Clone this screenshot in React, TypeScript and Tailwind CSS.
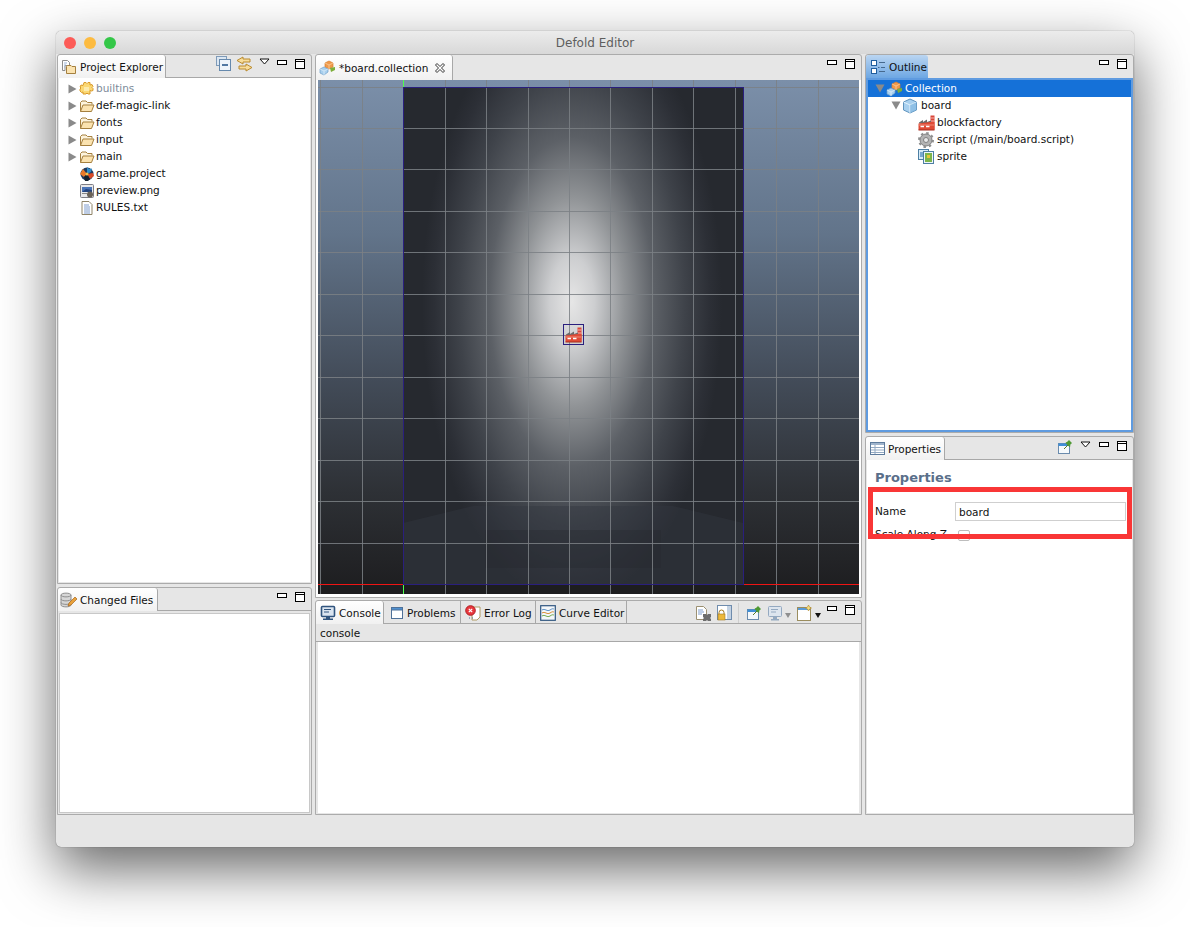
import React from 'react';

type IconProps = { className?: string };

function FolderIcon() {
  return (
    <svg width="16" height="16" viewBox="0 0 16 16" className="shrink-0">
      <path d="M1.500 13.500V4.500L3 3h4l1.500 1.500h4.500v2" fill="#fdf3dc" stroke="#a5803f" />
      <path d="M1.500 13.500L4 7h11l-2.500 6.500z" fill="#fbe3b0" stroke="#a5803f" strokeLinejoin="round" />
    </svg>
  );
}

function PuzzleIcon() {
  return (
    <svg width="16" height="16" viewBox="0 0 16 16" className="shrink-0">
      <path d="M5 1.500h2l1 1 1-1h2V4l2-.5 1 2-1 1 1 1v2l-1.500.5-1.500-.5v3.500H9l-1-1-1 1H4V11l-1.500.5L1 10V8l1-1-1-1 1-2 2 .5z" fill="#fbd873" stroke="#d99a2b" />
      <path d="M5 6h5v4H5z" fill="#fdf0bb" opacity="0.8" />
    </svg>
  );
}

function GameIcon() {
  return (
    <svg width="16" height="16" viewBox="0 0 16 16" className="shrink-0">
      <circle cx="8" cy="8" r="6.500" fill="#1e3a5f" />
      <path d="M8 1l2 2 3-.5L12 6 8 8z" fill="#2e8bc9" />
      <path d="M1 8l3-5 4 5-3 3z" fill="#e8792b" />
      <path d="M8 8l6-1 1 3-4 3z" fill="#d94a26" />
      <path d="M5 11l3-3 3 5-2 2H6z" fill="#14202e" />
      <circle cx="8" cy="8" r="1.500" fill="#f4c24a" />
    </svg>
  );
}

function PngIcon() {
  return (
    <svg width="16" height="16" viewBox="0 0 16 16" className="shrink-0">
      <rect x="1.500" y="1.500" width="13" height="13" rx="1" fill="#e8e8ea" stroke="#7d7d84" />
      <rect x="3" y="4" width="10" height="5" fill="#4a74b8" />
      <path d="M3 9l4-3 6 1v2z" fill="#24457f" />
      <circle cx="11" cy="11.500" r="3" fill="#6a6258" />
      <rect x="3" y="10" width="5" height="1" fill="#888" />
    </svg>
  );
}

function TextFileIcon() {
  return (
    <svg width="16" height="16" viewBox="0 0 16 16" className="shrink-0">
      <path d="M3 1.500h7l3 3v10H3z" fill="#fff" stroke="#8f8468" />
      <path d="M5 5h5M5 7h6M5 9h6M5 11h6M5 13h6" stroke="#7f9ccb" />
    </svg>
  );
}

function CollectionIcon() {
  return (
    <svg width="17" height="16" viewBox="0 0 17 16" className="shrink-0">
      <path d="M6 3l4-2 4 2v4l-4 2-4-2z" fill="#f0994a" stroke="#d97e2c" strokeWidth="0.700" />
      <path d="M6 3l4 2 4-2M10 5v4" stroke="#fbd5a6" strokeWidth="0.700" fill="none" />
      <path d="M11 8l5-1v3l-4 2z" fill="#7cae3a" />
      <path d="M1 9l4-2 4 2v3l-4 3-4-2z" fill="#a9d0ee" stroke="#6f9fc8" strokeWidth="0.700" />
      <path d="M1 9l4 2 4-2M5 11v4" stroke="#e4f1fb" strokeWidth="0.700" fill="none" />
    </svg>
  );
}

function CubeIcon() {
  return (
    <svg width="16" height="16" viewBox="0 0 16 16" className="shrink-0">
      <path d="M8 1l6.500 3v8L8 15l-6.500-3V4z" fill="#a8d0ef" stroke="#5f93bd" />
      <path d="M1.500 4L8 7l6.500-3M8 7v8" stroke="#e6f3fc" fill="none" />
      <path d="M8 7l6.500-3v8L8 15z" fill="#7fb5df" opacity="0.6" />
    </svg>
  );
}

function FactoryIcon({ className }: IconProps) {
  return (
    <svg className={`shrink-0 ${className ?? ''}`} width="17" height="16" viewBox="0 0 17 16">
      <path d="M12.500 0.500h4v14h-4z" fill="#d9473a" />
      <path d="M12.500 3h4M12.500 6h4" stroke="#f6b6ae" />
      <path d="M1 7.500l4-2.500v2l4-2.500v2.500l4-1.500v3H1z" fill="#6b6b6b" />
      <path d="M0.500 8.500l12-1.500h4v8h-16z" fill="#df4a35" />
      <path d="M1 10h15" stroke="#f08a78" />
      <path d="M2.500 11.500h3.500M8 11.500h3.500" stroke="#fff" strokeWidth="1.400" />
      <path d="M0.500 15h16" stroke="#a52c1f" />
    </svg>
  );
}

function GearIcon() {
  return (
    <svg width="16" height="16" viewBox="0 0 16 16" className="shrink-0">
      <circle cx="8" cy="8" r="6" fill="#b3b3b3" stroke="#808080" />
      <circle cx="8" cy="8" r="7" fill="none" stroke="#8f8f8f" strokeWidth="2" strokeDasharray="2.500 3" />
      <circle cx="8" cy="8" r="2.500" fill="#e9e9e9" stroke="#808080" />
    </svg>
  );
}

function SpriteIcon() {
  return (
    <svg width="16" height="16" viewBox="0 0 16 16" className="shrink-0">
      <rect x="0.500" y="0.500" width="10" height="10" fill="#d7ebf8" stroke="#4d7fa3" />
      <rect x="5.500" y="2.500" width="10" height="12" fill="#eef6fb" stroke="#4d7fa3" />
      <rect x="7" y="4" width="7" height="9" fill="#7db54b" />
      <rect x="9" y="6" width="3" height="3" fill="#e8c53a" />
      <rect x="2" y="3" width="3" height="5" fill="#79a8cf" />
    </svg>
  );
}

function OutlineIcon() {
  return (
    <svg width="16" height="16" viewBox="0 0 16 16" className="shrink-0">
      <rect x="1.500" y="1.500" width="5" height="5" fill="#fff" stroke="#1f5d9e" />
      <rect x="1.500" y="9.500" width="5" height="5" fill="#fff" stroke="#1f5d9e" />
      <path d="M9 3.500h6M8 8.500h1.500M11 8.500h4M9 12.500h6" stroke="#46698e" />
    </svg>
  );
}

function ExplorerIcon() {
  return (
    <svg width="16" height="16" viewBox="0 0 16 16" className="shrink-0">
      <path d="M1.500 1.500h5l2 2v3H4v5H1.500z" fill="#fff" stroke="#8d8d8d" />
      <path d="M3 4h3M3 6h2M3 8h1" stroke="#9db5d8" />
      <path d="M5.500 14.500v-7l1-1H10l1 1h3.500v7z" fill="#fbe3b0" stroke="#a5803f" />
    </svg>
  );
}

function DatabasePencilIcon() {
  return (
    <svg width="17" height="16" viewBox="0 0 17 16" className="shrink-0">
      <path d="M1 3c0-2.500 10-2.500 10 0v10c0 2.500-10 2.500-10 0z" fill="#d6d6d6" stroke="#8e8e8e" />
      <path d="M1 3c0 2.500 10 2.500 10 0M1 7c0 2.500 10 2.500 10 0M1 10.500c0 2.500 10 2.500 10 0" fill="none" stroke="#8e8e8e" />
      <path d="M8 14l1-3 6-6 2 2-6 6z" fill="#e9a23b" stroke="#a8661c" strokeWidth="0.700" />
    </svg>
  );
}

function ConsoleIcon() {
  return (
    <svg width="16" height="16" viewBox="0 0 16 16" className="shrink-0">
      <rect x="1.500" y="1.500" width="13" height="10" rx="1" fill="#dbe5f0" stroke="#30547e" strokeWidth="1.600" />
      <path d="M4 4.500h7M4 7h5" stroke="#30547e" />
      <path d="M6 12h4v1.500h3V15H3v-1.500h3z" fill="#30547e" />
    </svg>
  );
}

function ProblemsIcon() {
  return (
    <svg width="14" height="14" viewBox="0 0 14 14" className="shrink-0">
      <rect x="1.500" y="1.500" width="11" height="11" fill="#fff" stroke="#4f7198" />
      <rect x="1.500" y="1.500" width="11" height="2.500" fill="#4f90d0" stroke="#4f7198" />
    </svg>
  );
}

function ErrorLogIcon() {
  return (
    <svg width="16" height="16" viewBox="0 0 16 16" className="shrink-0">
      <path d="M7 2h8v10l-3 3H7z" fill="#fff" stroke="#b09a63" />
      <circle cx="5.500" cy="5.500" r="4.800" fill="#e8383d" stroke="#b01c22" />
      <path d="M3.800 3.800l3.400 3.400M7.200 3.800l-3.400 3.400" stroke="#fff" strokeWidth="1.200" />
      <path d="M4 13h1M7 13h1" stroke="#4f7198" />
    </svg>
  );
}

function CurveIcon() {
  return (
    <svg width="16" height="16" viewBox="0 0 16 16" className="shrink-0">
      <rect x="0.700" y="0.700" width="14.600" height="14.600" fill="#f4f7fa" stroke="#2f567f" strokeWidth="1.200" />
      <path d="M2 5c3-2 5 2 8 0s3-1 4-1" stroke="#5a8fc5" fill="none" />
      <path d="M2 8c3-2 5 2 8 0s3-1 4-1" stroke="#d98a30" fill="none" />
      <path d="M2 11c3-2 5 2 8 0s3-1 4-1" stroke="#6fa84a" fill="none" />
    </svg>
  );
}

function PropertiesIcon() {
  return (
    <svg width="15" height="13" viewBox="0 0 15 13" className="shrink-0">
      <rect x="0.500" y="0.500" width="14" height="12" fill="#fff" stroke="#5e7b9c" />
      <rect x="1" y="1" width="13" height="2" fill="#9fb4cc" />
      <path d="M1 5.500h13M1 8h13M1 10.500h13M5 3v9" stroke="#93a9c2" />
    </svg>
  );
}

function PinIcon() {
  return (
    <svg width="16" height="16" viewBox="0 0 16 16" className="shrink-0">
      <rect x="1.500" y="4.500" width="11" height="10" fill="#f5f9fc" stroke="#6a8bad" />
      <rect x="1.500" y="4.500" width="11" height="2.500" fill="#3f8fd6" />
      <path d="M7 10l4-4" stroke="#567c2a" />
      <path d="M10 3l2-2 3 3-2 2 .5 1-1 1-4-4 1-1z" fill="#4f9a34" />
    </svg>
  );
}

function Triangle() {
  return (
    <svg width="11" height="7" viewBox="0 0 11 7" className="mb-[6px] shrink-0">
      <path d="M1 1h9L5.500 6z" fill="#fff" stroke="#111" />
    </svg>
  );
}

function PaneControls() {
  return (
    <div className="flex items-start gap-[8px] pt-[4px] pr-[6px]">
      <div className="mt-px h-[5px] w-[10px] border border-black bg-white" />
      <div className="h-[10px] w-[10px] border border-black bg-white">
        <div className="h-[2px] border-b border-black" />
      </div>
    </div>
  );
}

function Tab({ icon, label, active, width, close }: { icon: React.ReactNode; label: string; active?: boolean; width: string; close?: boolean }) {
  return (
    <div
      className={`flex h-[23px] shrink-0 items-center border-r border-[#a8a8a8] ${width} ${
        active ? 'rounded-t-[3px] bg-gradient-to-b from-white to-[#f1f1f1]' : ''
      }`}
    >
      {icon}
      <span className="ml-[3px] pt-[2px] whitespace-nowrap">{label}</span>
      {close && (
        <svg width="12" height="12" viewBox="0 0 12 12" className="ml-[6px] shrink-0">
          <path d="M1.500 3L3 1.500 6 4.500 9 1.500 10.500 3 7.500 6 10.500 9 9 10.500 6 7.500 3 10.500 1.500 9 4.500 6z" fill="#fff" stroke="#333" />
        </svg>
      )}
    </div>
  );
}

function Arrow({ open }: { open?: boolean }) {
  return open ? (
    <svg width="10" height="9" viewBox="0 0 10 9" className="shrink-0">
      <path d="M0.500 0.500h9L5 8.500z" fill="#8a8a8a" />
    </svg>
  ) : (
    <svg width="9" height="10" viewBox="0 0 9 10" className="shrink-0">
      <path d="M0.500 0.500l8 4.500-8 4.500z" fill="#8a8a8a" />
    </svg>
  );
}

const projectItems: { icon: React.ReactNode; label: string; arrow: boolean; muted?: boolean }[] = [
  { icon: <PuzzleIcon />, label: 'builtins', arrow: true, muted: true },
  { icon: <FolderIcon />, label: 'def-magic-link', arrow: true },
  { icon: <FolderIcon />, label: 'fonts', arrow: true },
  { icon: <FolderIcon />, label: 'input', arrow: true },
  { icon: <FolderIcon />, label: 'main', arrow: true },
  { icon: <GameIcon />, label: 'game.project', arrow: false },
  { icon: <PngIcon />, label: 'preview.png', arrow: false },
  { icon: <TextFileIcon />, label: 'RULES.txt', arrow: false },
];

function ProjectExplorer() {
  return (
    <div className="flex h-[530px] flex-col rounded-t-[3px] border border-[#ababab] bg-[#e6e6e6]">
      <div className="flex h-[23px] items-start border-b border-[#a8a8a8]">
        <Tab active width="w-[108px] pl-[3px]" icon={<ExplorerIcon />} label="Project Explorer" />
        <div className="ml-auto flex items-center pt-px pr-[7px]">
          <svg width="16" height="16" viewBox="0 0 16 16" className="mr-[4px]">
            <rect x="0.500" y="0.500" width="10" height="9" fill="#dbe6f1" stroke="#7e9ab8" />
            <rect x="3.500" y="3.500" width="11" height="11" fill="#eef4fa" stroke="#6689ad" />
            <path d="M6 9h6" stroke="#1d4f85" strokeWidth="1.500" />
          </svg>
          <svg width="17" height="16" viewBox="0 0 17 16" className="mr-[6px]">
            <path d="M7 1L1 4.500 7 8V6h7V3H7z" fill="#f8dd9a" stroke="#b98a2e" />
            <path d="M10 8l6 3.500-6 3.500v-2H3v-3h7z" fill="#f8dd9a" stroke="#b98a2e" />
          </svg>
          <Triangle />
        </div>
        <PaneControls />
      </div>
      <div className="mx-px mb-px flex-1 bg-white pt-[2px]">
        {projectItems.map((item) => (
          <div key={item.label} className="flex h-[17px] items-center">
            <div className="flex w-[20px] justify-end pr-[2px]">{item.arrow && <Arrow />}</div>
            {item.icon}
            <span className={`ml-px ${item.muted ? 'text-[#7d8a99]' : ''}`}>{item.label}</span>
          </div>
        ))}
      </div>
    </div>
  );
}

function ChangedFiles() {
  return (
    <div className="flex flex-1 flex-col rounded-t-[3px] border border-[#ababab] bg-[#e6e6e6]">
      <div className="flex h-[23px] items-start justify-between border-b border-[#a8a8a8]">
        <Tab active width="w-[100px] pl-[2px]" icon={<DatabasePencilIcon />} label="Changed Files" />
        <PaneControls />
      </div>
      <div className="m-px mt-[2px] flex-1 border border-[#c8c8c8] bg-white" />
    </div>
  );
}

function SceneView() {
  const xs = [2, 44, 127, 168, 210, 251, 292, 334, 375, 417, 458, 500];
  const ys = [48, 89, 131, 172, 214, 255, 297, 338, 380, 421, 463];
  return (
    <svg width="541" height="514" viewBox="0 0 541 514" className="block">
      <defs>
        <linearGradient id="sky" x1="0" y1="0" x2="0" y2="1">
          <stop offset="0" stopColor="#7b8fa9" />
          <stop offset="0.3" stopColor="#62748a" />
          <stop offset="0.58" stopColor="#434c59" />
          <stop offset="0.8" stopColor="#2e3136" />
          <stop offset="1" stopColor="#1d1d1f" />
        </linearGradient>
        <radialGradient id="glow" gradientUnits="userSpaceOnUse" cx="0" cy="0" r="1" gradientTransform="translate(254 222) scale(150 300)">
          <stop offset="0" stopColor="#e6e6e6" />
          <stop offset="0.15" stopColor="#cdced0" />
          <stop offset="0.35" stopColor="#909396" />
          <stop offset="0.55" stopColor="#5c6066" />
          <stop offset="0.75" stopColor="#3f434a" />
          <stop offset="0.92" stopColor="#2c2f36" />
          <stop offset="1" stopColor="#26292f" />
        </radialGradient>
      </defs>
      <rect width="541" height="514" fill="url(#sky)" />
      <rect x="85" y="7" width="340" height="497" fill="#26292f" />
      <rect x="85" y="7" width="340" height="497" fill="url(#glow)" />
      <path d="M85 443l70-17h200l70 17v61H85z" fill="#343840" opacity="0.45" />
      <rect x="167" y="450" width="176" height="38" fill="#24272d" opacity="0.35" />
      <rect y="504" width="541" height="10" fill="#1d1d1f" />
      {xs.map((x) => (
        <path key={x} d={`M${x + 0.5} 0V514`} stroke="#7b8085" strokeOpacity="0.85" shapeRendering="crispEdges" />
      ))}
      <path d="M0 7.500H85M425 7.500H541" stroke="#7b8085" strokeOpacity="0.85" shapeRendering="crispEdges" />
      {ys.map((y) => (
        <path key={y} d={`M0 ${y + 0.5}H541`} stroke="#7b8085" strokeOpacity="0.85" shapeRendering="crispEdges" />
      ))}
      <path d="M0 504.500H85M425 504.500H541" stroke="#f01414" shapeRendering="crispEdges" />
      <path d="M85.500 0V7M85.500 504V514" stroke="#4dff4d" shapeRendering="crispEdges" />
      <rect x="85.500" y="7.500" width="340" height="497" fill="none" stroke="#2a1f7d" shapeRendering="crispEdges" />
      <rect x="245.500" y="244.500" width="20" height="20" fill="none" stroke="#2a1f7d" shapeRendering="crispEdges" />
      <g transform="translate(247 247)">
        <FactoryIcon />
      </g>
    </svg>
  );
}

function EditorPane() {
  return (
    <div className="flex h-[544px] flex-col rounded-t-[3px] border border-[#ababab] bg-[#e6e6e6]">
      <div className="flex h-[25px] items-start justify-between">
        <Tab active close width="w-[137px] pl-[3px] !h-[25px]" icon={<CollectionIcon />} label="*board.collection" />
        <PaneControls />
      </div>
      <div className="bg-white px-[2px]">
        <SceneView />
      </div>
      <div className="flex-1 bg-white" />
    </div>
  );
}

function ConsolePane() {
  return (
    <div className="flex flex-1 flex-col rounded-t-[3px] border border-[#ababab] bg-[#e6e6e6]">
      <div className="flex h-[23px] items-start border-b border-[#a8a8a8]">
        <Tab active width="w-[68px] pl-[4px]" icon={<ConsoleIcon />} label="Console" />
        <Tab width="w-[77px] pl-[6px]" icon={<ProblemsIcon />} label="Problems" />
        <Tab width="w-[75px] pl-[4px]" icon={<ErrorLogIcon />} label="Error Log" />
        <Tab width="w-[91px] pl-[4px]" icon={<CurveIcon />} label="Curve Editor" />
        <div className="ml-auto flex items-center pt-[2px]">
          <svg width="17" height="16" viewBox="0 0 17 16">
            <path d="M1.500 1.500h7l3 3v10h-10z" fill="#fff" stroke="#9b9072" />
            <path d="M3 5h5M3 7h6M3 9h4" stroke="#7f9ccb" />
            <path d="M8 9h3l1 1 1-1h3v3l-1 1 1 1v2h-3l-1-1-1 1H8v-2l1-1-1-1z" fill="#6c6c6c" />
          </svg>
          <svg width="16" height="16" viewBox="0 0 16 16" className="ml-[5px]">
            <rect x="0.500" y="0.500" width="14" height="14" fill="#fff" stroke="#6f8cad" />
            <rect x="10" y="1" width="4" height="13" fill="#c3d2e3" />
            <path d="M2 10V7.500a2.500 2.500 0 0 1 5 0V10" fill="none" stroke="#a47a1f" />
            <rect x="1" y="9" width="7" height="6" fill="#edb93c" stroke="#a47a1f" strokeWidth="0.600" />
          </svg>
          <div className="ml-[5px] h-[20px] w-px bg-[#cfcfcf]" />
          <div className="ml-[7px]">
            <PinIcon />
          </div>
          <svg width="15" height="15" viewBox="0 0 15 15" className="ml-[6px]">
            <rect x="0.500" y="0.500" width="13" height="10" rx="1" fill="#dde5ee" stroke="#94a9c0" />
            <path d="M3 3.500h7M3 6h5" stroke="#94a9c0" />
            <path d="M5 11h4v2h2v1.500H3V13h2z" fill="#94a9c0" />
          </svg>
          <svg width="6" height="5" viewBox="0 0 6 5" className="mt-[4px] ml-[2px]">
            <path d="M0 0h6L3 5z" fill="#8f8f8f" />
          </svg>
          <svg width="16" height="16" viewBox="0 0 16 16" className="ml-[6px]">
            <rect x="0.500" y="2.500" width="13" height="13" fill="#fff" stroke="#9b8d5e" />
            <rect x="1" y="3" width="12" height="2" fill="#5a9bd8" />
            <path d="M11.500 0l1 2 2 1-2 1-1 2-1-2-2-1 2-1z" fill="#f8dd7a" stroke="#a47a1f" strokeWidth="0.500" />
          </svg>
          <svg width="6" height="5" viewBox="0 0 6 5" className="mt-[4px] ml-[2px]">
            <path d="M0 0h6L3 5z" fill="#111" />
          </svg>
          <div className="w-[6px]" />
        </div>
        <PaneControls />
      </div>
      <div className="flex h-[18px] items-center border-b border-[#a8a8a8] pt-[2px] pl-[4px]">console</div>
      <div className="mx-[2px] mb-px flex-1 bg-white" />
    </div>
  );
}

function OutlinePane() {
  return (
    <div className="flex h-[379px] flex-col rounded-t-[3px] border border-[#ababab] bg-[#e6e6e6]">
      <div className="flex h-[23px] items-start justify-between">
        <div className="flex h-[23px] w-[62px] items-center rounded-t-[3px] bg-gradient-to-b from-[#bad5f1] to-[#6da7e3] pl-[4px]">
          <OutlineIcon />
          <span className="ml-[3px] pt-[2px]">Outline</span>
        </div>
        <PaneControls />
      </div>
      <div className="flex-1 border-2 border-[#5f9be0] bg-white">
        <div className="flex h-[17px] items-center bg-[#1571d8] text-white">
          <div className="flex w-[18px] justify-end pr-px">
            <Arrow open />
          </div>
          <CollectionIcon />
          <span className="ml-[2px]">Collection</span>
        </div>
        <div className="flex h-[17px] items-center">
          <div className="flex w-[34px] justify-end pr-px">
            <Arrow open />
          </div>
          <CubeIcon />
          <span className="ml-[3px]">board</span>
        </div>
        <div className="flex h-[17px] items-center pl-[50px]">
          <FactoryIcon />
          <span className="ml-[2px]">blockfactory</span>
        </div>
        <div className="flex h-[17px] items-center pl-[50px]">
          <GearIcon />
          <span className="ml-[3px]">script (/main/board.script)</span>
        </div>
        <div className="flex h-[17px] items-center pl-[50px]">
          <SpriteIcon />
          <span className="ml-[3px]">sprite</span>
        </div>
      </div>
    </div>
  );
}

function PropertiesPane() {
  return (
    <div className="flex flex-1 flex-col rounded-t-[3px] border border-[#ababab] bg-[#e6e6e6]">
      <div className="flex h-[23px] items-start border-b border-[#a8a8a8]">
        <Tab active width="w-[79px] pl-[4px]" icon={<PropertiesIcon />} label=" Properties" />
        <div className="ml-auto flex items-center pt-[2px] pr-[8px]">
          <PinIcon />
          <div className="w-[7px]" />
          <Triangle />
        </div>
        <PaneControls />
      </div>
      <div className="relative mx-px mb-px flex-1 bg-white pl-[8px]">
        <div className="pt-[9px] text-[13px] leading-[18px] font-bold text-[#5a6f8a]">Properties</div>
        <div className="mt-[15px] flex h-[19px] items-center">
          <span className="w-[80px]">Name</span>
          <div className="flex h-[19px] w-[171px] items-center border border-[#cfcfcf] pt-[2px] pl-[3px]">board</div>
        </div>
        <div className="mt-[7px] flex h-[14px] items-center">
          <span className="w-[83px] whitespace-nowrap">Scale Along Z</span>
          <div className="h-[11px] w-[12px] rounded-[2px] border border-[#bdbdbd] bg-white" />
        </div>
        <div className="absolute top-[27px] left-px h-[52px] w-[264px] border-[5px] border-[#f93636]" />
      </div>
    </div>
  );
}

export default function App() {
  return (
    <div className="min-h-[927px] bg-white pt-[31px] pl-[56px] font-['DejaVu_Sans',sans-serif] text-[10.5px] text-[#111]">
      <div className="flex h-[816px] w-[1078px] flex-col overflow-hidden rounded-[5px] bg-[#e6e6e6] shadow-[0_22px_55px_rgba(0,0,0,0.6),0_0_1px_rgba(0,0,0,0.6)]">
        <div className="relative flex h-[23px] shrink-0 items-center justify-center bg-gradient-to-b from-[#ececec] to-[#d8d8d8] text-[12px] text-[#5e5e5e]">
          <div className="absolute top-[6px] left-[8px] flex gap-[8px]">
            <span className="h-[12px] w-[12px] rounded-full bg-[#fc5b57]" />
            <span className="h-[12px] w-[12px] rounded-full bg-[#fdbb40]" />
            <span className="h-[12px] w-[12px] rounded-full bg-[#34c748]" />
          </div>
          Defold Editor
        </div>
        <div className="flex h-[761px] shrink-0 gap-[3px] pl-px">
          <div className="flex w-[255px] flex-col gap-[3px]">
            <ProjectExplorer />
            <ChangedFiles />
          </div>
          <div className="flex w-[547px] flex-col gap-[2px]">
            <EditorPane />
            <ConsolePane />
          </div>
          <div className="flex w-[269px] flex-col gap-[3px]">
            <OutlinePane />
            <PropertiesPane />
          </div>
        </div>
      </div>
    </div>
  );
}
